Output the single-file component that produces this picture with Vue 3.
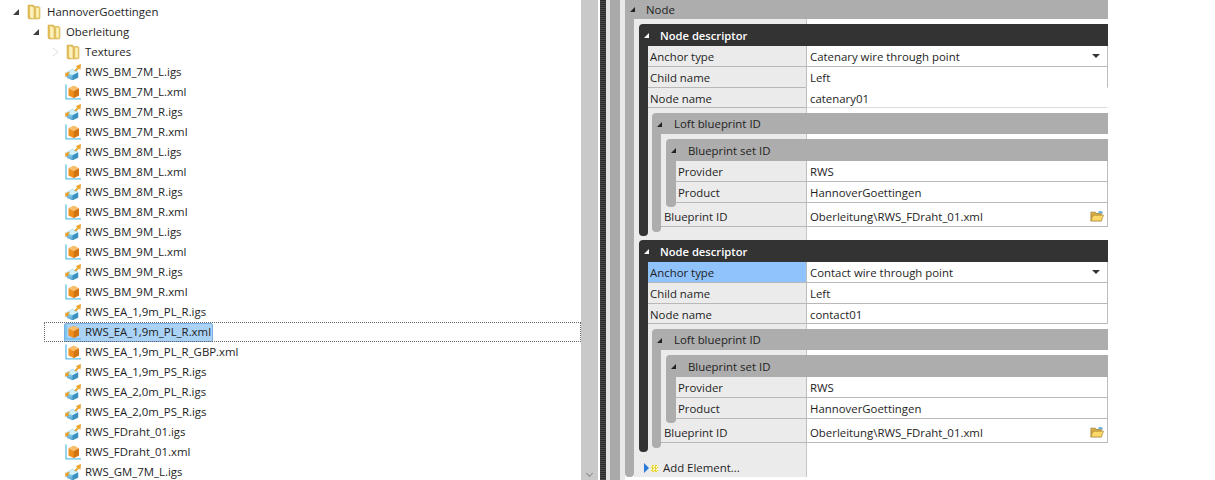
<script setup>
const files = [
  ['RWS_BM_7M_L.igs','igs'],['RWS_BM_7M_L.xml','xml'],['RWS_BM_7M_R.igs','igs'],['RWS_BM_7M_R.xml','xml'],
  ['RWS_BM_8M_L.igs','igs'],['RWS_BM_8M_L.xml','xml'],['RWS_BM_8M_R.igs','igs'],['RWS_BM_8M_R.xml','xml'],
  ['RWS_BM_9M_L.igs','igs'],['RWS_BM_9M_L.xml','xml'],['RWS_BM_9M_R.igs','igs'],['RWS_BM_9M_R.xml','xml'],
  ['RWS_EA_1,9m_PL_R.igs','igs'],['RWS_EA_1,9m_PL_R.xml','xml',true],['RWS_EA_1,9m_PL_R_GBP.xml','xml'],
  ['RWS_EA_1,9m_PS_R.igs','igs'],['RWS_EA_2,0m_PL_R.igs','igs'],['RWS_EA_2,0m_PS_R.igs','igs'],
  ['RWS_FDraht_01.igs','igs'],['RWS_FDraht_01.xml','xml'],['RWS_GM_7M_L.igs','igs']
].map(([name, type, selected]) => ({ name, type, selected }))

const descriptors = [
  { anchor: 'Catenary wire through point', node: 'catenary01', active: false, faded: true },
  { anchor: 'Contact wire through point', node: 'contact01', active: true, faded: false }
]
</script>

<template>
  <div class="page">
    <svg class="defs" width="0" height="0">
      <defs>
        <linearGradient id="fold" x1="0" x2="1" y1="0" y2="0">
          <stop offset="0" stop-color="#f3dc80"/><stop offset=".5" stop-color="#fff8d0"/><stop offset="1" stop-color="#f3dc8a"/>
        </linearGradient>
        <linearGradient id="cube" x1="0" x2="0" y1="0" y2="1">
          <stop offset="0" stop-color="#c4ecf9"/><stop offset="1" stop-color="#4fa6d2"/>
        </linearGradient>
        <symbol id="folder" viewBox="0 0 16 16">
          <path d="M2 1h5.500l1 1.500V15h-5.500L2 13.500z" fill="#e3bd58" stroke="#cda544" stroke-width=".5"/>
          <path d="M3.500 1.500l4.700 2V15l-4.700-1.500z" fill="url(#fold)" stroke="#dcb650" stroke-width=".4"/>
          <path d="M9 2.500h4l1 1V14l-1 1H9z" fill="#eccf6c" stroke="#c9a342" stroke-width=".5"/>
          <path d="M10.300 4h2.400v9.500h-2.400z" fill="#fdf2bc"/>
        </symbol>
        <symbol id="igs" viewBox="0 0 16 16">
          <path d="M2 8.500L7.500 5.500l5.500 3v5L7.500 16 2 13.500z" fill="url(#cube)" stroke="#4a98c2" stroke-width=".5"/>
          <path d="M2 8.500L7.500 5.500l5.500 3-5.500 2.700z" fill="#d2f1fb"/>
          <path d="M7.500 11.200V16l5.500-2.500v-5z" fill="#3a90bf"/>
          <path d="M9.500 6.500l3-3-1.300-1.300L15.800.2l-.6 5.200-1.300-1.300-2.700 3.200z" fill="#f2a520" stroke="#c67d10" stroke-width=".3"/>
          <path d="M4.500 8.800L2.800 10.500l1 1L0 12.500l.8-4 1 1 1.700-1.700z" fill="#f2a520" stroke="#c67d10" stroke-width=".3"/>
        </symbol>
        <symbol id="xml" viewBox="0 0 16 16">
          <path d="M1 .500V14.800h15" fill="none" stroke="#63bdea" stroke-width="1.300"/>
          <path d="M3.500 4.500L8.700 1.800l5.200 2.700v7L8.700 14l-5.200-2.500z" fill="#ef8f1f"/>
          <path d="M3.500 4.500L8.700 1.800l5.200 2.700-5.200 2.700z" fill="#f9bf6c"/>
          <path d="M8.700 7.200l5.200-2.700v7L8.700 14z" fill="#d27512"/>
        </symbol>
        <symbol id="open" viewBox="0 0 16 14">
          <path d="M1 2h5l1 1.500h6V12H1z" fill="#d8ad49" stroke="#8c6b25" stroke-width=".7"/>
          <path d="M9.500 3V1.500l2-1 3 1v2z" fill="#6db0de"/>
          <path d="M1 12l2.500-6.500H15.500L13 12z" fill="#fbd868" stroke="#a67f2c" stroke-width=".7"/>
        </symbol>
      </defs>
    </svg>

    <section class="tree">
      <div class="row l1">
        <span class="tw open"></span>
        <svg class="ic"><use href="#folder"/></svg>
        <span>HannoverGoettingen</span>
      </div>
      <div class="row l2">
        <span class="tw open"></span>
        <svg class="ic"><use href="#folder"/></svg>
        <span>Oberleitung</span>
      </div>
      <div class="row l3">
        <span class="tw closed"></span>
        <svg class="ic"><use href="#folder"/></svg>
        <span>Textures</span>
      </div>
      <div v-for="f in files" :key="f.name" class="row file" :class="{ sel: f.selected }">
        <span class="hl">
          <svg class="ic"><use :href="'#' + f.type"/></svg>
          <span class="fname">{{ f.name }}</span>
        </span>
      </div>
    </section>

    <aside class="scroll"><span class="chev"></span></aside>
    <div class="gap"></div>
    <div class="splitter"></div>
    <div class="strip"></div>
    <div class="outer"></div>
    <div class="strip narrow"></div>

    <section class="node">
      <header class="head gray first"><span class="tw dark"></span>Node</header>
      <div class="node-body">
        <div class="bar gray-bar"></div>
        <div class="node-content">
          <div v-for="d in descriptors" :key="d.node" class="desc" :class="{ faded: d.faded }">
            <header class="head black"><span class="tw white"></span>Node descriptor</header>
            <div class="nest">
              <div class="bar black-bar"></div>
              <div class="nest-main">
                <div class="prop" :class="{ active: d.active }">
                  <div class="lab">Anchor type</div>
                  <div class="val">{{ d.anchor }}<span class="drop"></span></div>
                </div>
                <div class="prop fade"><div class="lab">Child name</div><div class="val">Left</div></div>
                <div class="prop fade short"><div class="lab">Node name</div><div class="val">{{ d.node }}</div></div>
                <div class="loft">
                  <header class="head gray"><span class="tw dark"></span>Loft blueprint ID</header>
                  <div class="nest">
                    <div class="bar gray-bar"></div>
                    <div class="nest-main pad-end">
                      <div class="set">
                        <header class="head gray tall"><span class="tw dark"></span>Blueprint set ID</header>
                        <div class="nest">
                          <div class="bar gray-bar set-bar"></div>
                          <div class="nest-main">
                            <div class="prop"><div class="lab">Provider</div><div class="val">RWS</div></div>
                            <div class="prop"><div class="lab">Product</div><div class="val">HannoverGoettingen</div></div>
                          </div>
                        </div>
                      </div>
                      <div class="prop bp">
                        <div class="lab">Blueprint ID</div>
                        <div class="val">Oberleitung\RWS_FDraht_01.xml<svg class="open-ic"><use href="#open"/></svg></div>
                      </div>
                    </div>
                  </div>
                </div>
                <div class="tail"></div>
              </div>
            </div>
          </div>
          <div class="add">
            <span class="play"></span>
            <span class="dots"></span>
            <span>Add Element...</span>
          </div>
        </div>
      </div>
    </section>
  </div>
</template>

<style scoped>
* { box-sizing: border-box; }
.page {
  width: 1215px;
  height: 480px;
  overflow: hidden;
  display: flex;
  align-items: flex-start;
  background: #fff;
  color: #1e1e1e;
  font: 11.4px/20px "Open Sans", "Noto Sans", sans-serif;
}
.defs { position: absolute; }
.tree { width: 581px; flex: none; padding-top: 2px; height: 480px; }
.row { height: 20px; display: flex; align-items: center; white-space: nowrap; }
.l1 { padding-left: 13px; }
.l2 { padding-left: 33px; }
.l3 { padding-left: 53px; }
.tw { width: 0; height: 0; flex: none; display: inline-block; box-sizing: content-box; }
.tw.open {
  border-left: 6px solid transparent; border-bottom: 6px solid #404040;
  margin-right: 7px;
}
.tw.closed {
  border-left: 5px solid #fff; border-top: 4px solid transparent; border-bottom: 4px solid transparent;
  filter: drop-shadow(0 0 .6px #666); margin-right: 7px;
}
.ic { width: 16px; height: 16px; flex: none; margin-right: 4px; }
.l1 .ic { margin-right: 5px; }
.file { padding-left: 45px; position: relative; }
.hl { display: flex; align-items: center; height: 20px; padding: 0 1px 0 20px; }
.sel { margin-left: 44px; padding-left: 0; outline: 1px dotted #666; outline-offset: -1px; }
.sel .hl { height: 19px; background: #a9d2f5; border: 1px solid #78aee5; border-radius: 2px; padding-left: 0; margin-left: 20px; }
.scroll { width: 17px; height: 480px; background: #c9c9c9; flex: none; position: relative; }
.chev {
  position: absolute; left: 6px; bottom: 4px; width: 5px; height: 5px;
  border-right: 1px solid #8c8c8c; border-bottom: 1px solid #8c8c8c; transform: rotate(45deg);
}
.gap { width: 2px; flex: none; }
.splitter {
  width: 6px; height: 480px; flex: none;
  background: repeating-linear-gradient(#2b2b2b 0 1px, #4a4a4a 1px 2px);
}
.strip { width: 4px; height: 480px; flex: none; background: #e4e4e4; }
.outer { width: 10px; height: 480px; flex: none; background: #a9a9a9; }
.strip.narrow { width: 5px; background: #e8e8e8; }
.node { width: 483px; flex: none; }
.head { display: flex; align-items: center; padding-top: 1px; }
.head .tw { border-left: 5px solid transparent; border-bottom: 5px solid #222; margin-right: 12px; margin-left: 5px; }
.head .tw.white { border-bottom-color: #fff; margin-right: 11px; }
.gray { background: #adadad; height: 21px; border-top-left-radius: 4px; color: #222; }
.tall { height: 22px; }
.first { height: 19px; border-radius: 0; padding-top: 0; }
.first .tw { margin-right: 11px; }
.black { background: #333; height: 22px; color: #fff; font-weight: 600; font-size: 11.2px; border-top-left-radius: 4px; }
.bar { flex: none; border-radius: 0 0 4px 4px; }
.gray-bar { width: 9px; background: #adadad; }
.black-bar { width: 9px; background: #333; }
.node-body { display: flex; height: 458px; }
.node-content {
  flex: 1;
  padding: 5px 0 0 5px;
  background: linear-gradient(90deg, #ebebeb 172px, #c4c4c4 172px 173px, #fff 173px);
}
.desc + .desc { margin-top: 4px; }
.nest { display: flex; }
.nest-main { flex: 1; min-width: 0; }
.prop { display: flex; height: 21px; }
.short { height: 20px; }
.lab {
  width: 158px; flex: none; padding: 0 0 0 2px; line-height: 21px;
  background: #ebebeb; border-bottom: 1px solid #b8b8b8;
}
.val {
  flex: 1; position: relative; padding-left: 3px; line-height: 21px; background: #fff;
  border-left: 1px solid #bdbdbd; border-right: 1px solid #bdbdbd; border-bottom: 1px solid #b8b8b8;
}
.faded .fade .val { border-bottom-color: #fff; }
.faded .short .val { border-right-color: #fff; border-bottom-color: #dcdcdc; }
.active .lab { background: #90c2fb; }
.drop {
  position: absolute; right: 7px; top: 8px; width: 0; height: 0;
  border-left: 4px solid transparent; border-right: 4px solid transparent; border-top: 4px solid #333;
}
.loft { padding: 5px 0 0 4px; }
.pad-end { padding-bottom: 5px; }
.set { padding: 5px 0 0 5px; position: relative; z-index: 1; margin-bottom: -4px; }
.set .lab { width: 130px; }
.set .gray-bar { width: 10px; }
.set .prop:last-child { margin-bottom: 4px; }
.bp { height: 24px; }
.bp .lab { width: 145px; padding: 3px 0 0 3px; }
.bp .val { padding-top: 3px; }
.open-ic { position: absolute; right: 3px; top: 7px; width: 14px; height: 13px; }
.tail { height: 4px; }
.add { display: flex; align-items: center; height: 20px; margin-top: 6px; padding-left: 5px; }
.play {
  width: 0; height: 0; border-left: 5px solid #2a78d8; box-sizing: content-box;
  border-top: 5px solid transparent; border-bottom: 5px solid transparent; margin-right: 2px;
}
.dots {
  width: 7px; height: 7px; margin-right: 5px;
  background: repeating-conic-gradient(#e6d23c 0 25%, #fff8c0 0 50%) 0 0 / 3px 3px;
}
</style>
